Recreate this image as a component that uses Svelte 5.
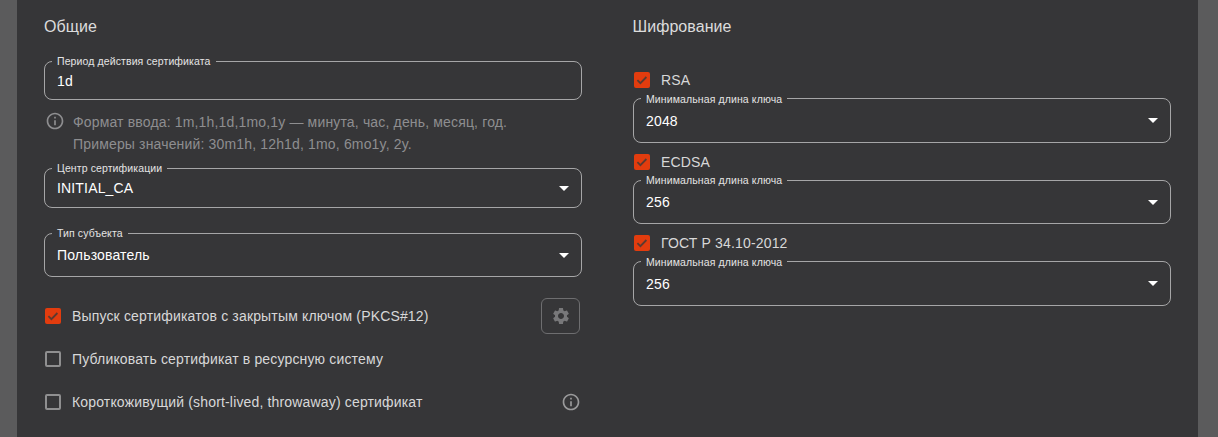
<script lang="ts">
const keyTypes = [
  { name: 'RSA', value: '2048' },
  { name: 'ECDSA', value: '256' },
  { name: 'ГОСТ Р 34.10-2012', value: '256' }
];
const minLengthLabel = 'Минимальная длина ключа';
</script>

{#snippet infoIcon(cls)}
  <svg class={cls} viewBox="0 0 24 24" aria-hidden="true">
    <path d="M11 7h2v2h-2zm0 4h2v6h-2zm1-9C6.48 2 2 6.48 2 12s4.48 10 10 10 10-4.48 10-10S17.52 2 12 2zm0 18c-4.41 0-8-3.59-8-8s3.59-8 8-8 8 3.59 8 8-3.59 8-8 8z" />
  </svg>
{/snippet}

{#snippet checkbox(checked)}
  {#if checked}
    <span class="box checked">
      <svg viewBox="0 0 16 16" aria-hidden="true"><path d="M3.4 8.2l3 3 6-6.2" /></svg>
    </span>
  {:else}
    <span class="box"></span>
  {/if}
{/snippet}

{#snippet selectField(label, value, cls)}
  <fieldset class="field {cls}">
    <legend>{label}</legend>
    <div class="value">
      <span>{value}</span>
      <span class="arrow"></span>
    </div>
  </fieldset>
{/snippet}

<div class="page">
  <div class="panel">
    <section class="col">
      <h3>Общие</h3>

      <fieldset class="field short first">
        <legend>Период действия сертификата</legend>
        <div class="value"><span>1d</span></div>
      </fieldset>

      <div class="hint">
        {@render infoIcon('hint-icon')}
        <p>Формат ввода: 1m,1h,1d,1mo,1y — минута, час, день, месяц, год.<br />Примеры значений: 30m1h, 12h1d, 1mo, 6mo1y, 2y.</p>
      </div>

      {@render selectField('Центр сертификации', 'INITIAL_CA', 'short')}
      {@render selectField('Тип субъекта', 'Пользователь', 'tall subject')}

      <div class="checks">
        <div class="check-row">
          <label>{@render checkbox(true)}<span>Выпуск сертификатов с закрытым ключом (PKCS#12)</span></label>
          <button class="gear" type="button" aria-label="Настройки">
            <svg viewBox="0 0 24 24" aria-hidden="true">
              <path d="M19.14 12.94c.04-.3.06-.61.06-.94 0-.32-.02-.64-.07-.94l2.03-1.58c.18-.14.23-.41.12-.61l-1.92-3.32c-.12-.22-.37-.29-.59-.22l-2.39.96c-.5-.38-1.03-.7-1.62-.94l-.36-2.54c-.04-.24-.24-.41-.48-.41h-3.84c-.24 0-.43.17-.47.41l-.36 2.54c-.59.24-1.13.57-1.62.94l-2.39-.96c-.22-.08-.47 0-.59.22L2.74 8.87c-.12.21-.08.47.12.61l2.03 1.58c-.05.3-.09.63-.09.94s.02.64.07.94l-2.03 1.58c-.18.14-.23.41-.12.61l1.92 3.32c.12.22.37.29.59.22l2.39-.96c.5.38 1.03.7 1.62.94l.36 2.54c.05.24.24.41.48.41h3.84c.24 0 .44-.17.47-.41l.36-2.54c.59-.24 1.13-.56 1.62-.94l2.39.96c.22.08.47 0 .59-.22l1.92-3.32c.12-.22.07-.47-.12-.61l-2.01-1.58zM12 15.6c-1.98 0-3.6-1.62-3.6-3.6s1.62-3.6 3.6-3.6 3.6 1.62 3.6 3.6-1.62 3.6-3.6 3.6z" />
            </svg>
          </button>
        </div>
        <div class="check-row">
          <label>{@render checkbox(false)}<span>Публиковать сертификат в ресурсную систему</span></label>
        </div>
        <div class="check-row">
          <label>{@render checkbox(false)}<span>Короткоживущий (short-lived, throwaway) сертификат</span></label>
          {@render infoIcon('row-info')}
        </div>
      </div>
    </section>

    <section class="col">
      <h3>Шифрование</h3>
      <div class="keys">
        {#each keyTypes as key}
          <div class="key">
            <label class="key-label">{@render checkbox(true)}<span>{key.name}</span></label>
            {@render selectField(minLengthLabel, key.value, 'tall')}
          </div>
        {/each}
      </div>
    </section>
  </div>
</div>

<style>
  :global(body) {
    margin: 0;
    background: #5b5b5c;
  }

  .page {
    height: 437px;
    padding: 0 20px 0 17px;
    overflow: hidden;
    font-family: 'Liberation Sans', Arial, sans-serif;
  }

  .panel {
    height: 100%;
    box-sizing: border-box;
    background: #363638;
    padding: 18px 27px 0;
    display: grid;
    grid-template-columns: 538px 538px;
    column-gap: 51px;
  }

  h3 {
    margin: 0;
    font-size: 16px;
    line-height: 18px;
    font-weight: 400;
    letter-spacing: 0.05px;
    color: #dcdcdc;
  }

  .col:last-child h3 {
    margin-left: -0.5px;
  }

  .field {
    margin: 0;
    padding: 0 12px 5px;
    min-width: 0;
    border: 1px solid #a6a6a7;
    border-radius: 8px;
    color: #fff;
  }

  legend {
    margin-left: -5px;
    padding: 0 5px;
    font-size: 10.5px;
    line-height: 12px;
    letter-spacing: 0.11px;
    color: #e4e4e4;
  }

  .first {
    margin-top: 19px;
    padding-bottom: 4px;
  }

  .value {
    display: flex;
    align-items: center;
    justify-content: space-between;
    font-size: 14px;
    letter-spacing: 0.16px;
    color: #fff;
  }

  .short .value {
    height: 28px;
  }

  .tall .value {
    height: 32px;
  }

  .arrow {
    width: 0;
    height: 0;
    border-left: 5px solid transparent;
    border-right: 5px solid transparent;
    border-top: 5px solid #fff;
  }

  .hint {
    display: flex;
    gap: 8px;
    margin: 11px 0 7px 1px;
    color: #8e8e90;
  }

  :global(.hint-icon) {
    width: 20px;
    height: 20px;
    flex: none;
    fill: #8e8e90;
  }

  .hint p {
    margin: 0;
    font-size: 14px;
    line-height: 22px;
    letter-spacing: 0.16px;
  }

  .subject {
    margin-top: 19px;
  }

  .checks {
    margin-top: 17px;
  }

  .check-row {
    height: 43px;
    display: flex;
    align-items: center;
    justify-content: space-between;
    padding-right: 2px;
  }

  label {
    display: flex;
    align-items: center;
    gap: 11px;
    font-size: 14px;
    letter-spacing: 0.16px;
    color: #d8d8d8;
  }

  .box {
    width: 16px;
    height: 16px;
    box-sizing: border-box;
    margin-left: 1px;
    flex: none;
    border: 2px solid #8f8f90;
    border-radius: 2px;
  }

  .box.checked {
    border: none;
    background: #e23c0e;
  }

  .box svg {
    display: block;
    width: 16px;
    height: 16px;
    fill: none;
    stroke: #5b3a30;
    stroke-width: 1.8;
  }

  .gear {
    width: 39px;
    height: 36px;
    padding: 0;
    display: flex;
    align-items: center;
    justify-content: center;
    background: none;
    border: 1px solid #6e6e70;
    border-radius: 6px;
  }

  .gear svg {
    width: 20px;
    height: 20px;
    fill: #78787a;
  }

  :global(.row-info) {
    width: 20px;
    height: 20px;
    margin-right: -1px;
    fill: #9a9a9b;
  }

  .keys {
    margin-top: 35px;
  }

  .key {
    margin-bottom: 10px;
  }

  .key-label {
    height: 18px;
    margin-bottom: 3.5px;
    gap: 11px;
    font-size: 14px;
  }
</style>
